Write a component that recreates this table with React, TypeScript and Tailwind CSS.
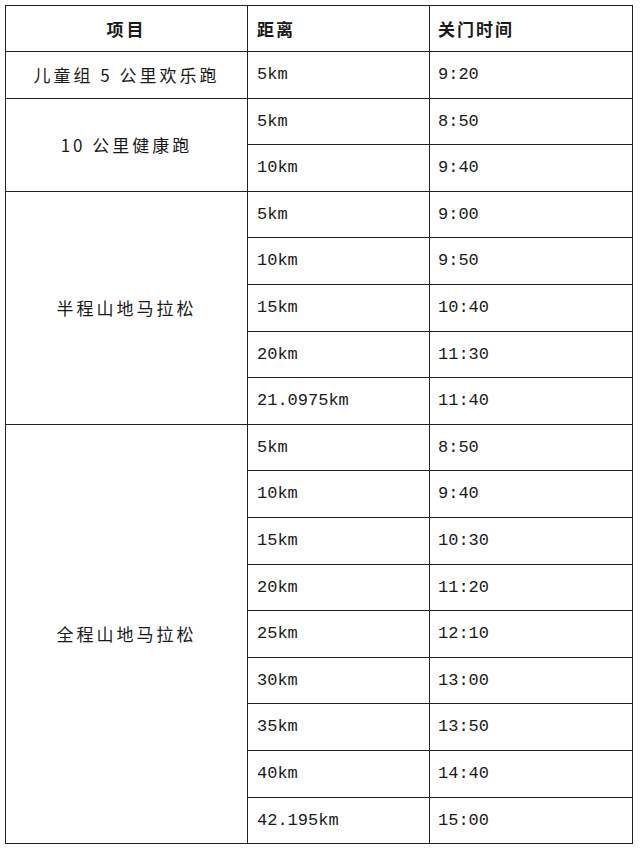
import React from 'react';

type Group = {
  name: string;
  rows: [string, string][];
};

const groups: Group[] = [
  { name: '儿童组 5 公里欢乐跑', rows: [['5km', '9:20']] },
  { name: '10 公里健康跑', rows: [['5km', '8:50'], ['10km', '9:40']] },
  {
    name: '半程山地马拉松',
    rows: [
      ['5km', '9:00'],
      ['10km', '9:50'],
      ['15km', '10:40'],
      ['20km', '11:30'],
      ['21.0975km', '11:40'],
    ],
  },
  {
    name: '全程山地马拉松',
    rows: [
      ['5km', '8:50'],
      ['10km', '9:40'],
      ['15km', '10:30'],
      ['20km', '11:20'],
      ['25km', '12:10'],
      ['30km', '13:00'],
      ['35km', '13:50'],
      ['40km', '14:40'],
      ['42.195km', '15:00'],
    ],
  },
];

const cjk = "font-['Noto_Sans_CJK_SC',sans-serif]";
const mono = "font-['Liberation_Mono','Noto_Sans_CJK_SC',monospace]";

export default function App() {
  return (
    <div className="min-h-[850px] bg-white pt-[5px] pl-[5px]">
      <table className="w-[627px] table-fixed border-collapse text-[#1a1a1a]">
        <colgroup>
          <col className="w-[242px]" />
          <col className="w-[182px]" />
          <col className="w-[203px]" />
        </colgroup>
        <thead>
          <tr className="h-[46px]">
            <th className={`border-[1.5px] border-[#222] text-center text-[17px] font-bold tracking-[3px] ${cjk}`}>
              项目
            </th>
            <th className={`border-[1.5px] border-[#222] pl-[9px] text-left text-[17px] font-bold tracking-[2px] ${cjk}`}>
              距离
            </th>
            <th className={`border-[1.5px] border-[#222] pl-[8px] text-left text-[17px] font-bold tracking-[2px] ${cjk}`}>
              关门时间
            </th>
          </tr>
        </thead>
        <tbody>
          {groups.map((g) =>
            g.rows.map(([dist, time], i) => (
              <tr key={g.name + dist} className="h-[46.6px]">
                {i === 0 && (
                  <td
                    rowSpan={g.rows.length}
                    className={`border-[1.5px] border-[#222] text-center align-middle text-[17px] tracking-[3px] ${cjk}`}
                  >
                    {g.name}
                  </td>
                )}
                <td className={`border-[1.5px] border-[#222] pl-[9px] align-middle text-[17px] ${mono}`}>
                  {dist}
                </td>
                <td className={`border-[1.5px] border-[#222] pl-[8px] align-middle text-[17px] ${mono}`}>
                  {time}
                </td>
              </tr>
            ))
          )}
        </tbody>
      </table>
    </div>
  );
}
